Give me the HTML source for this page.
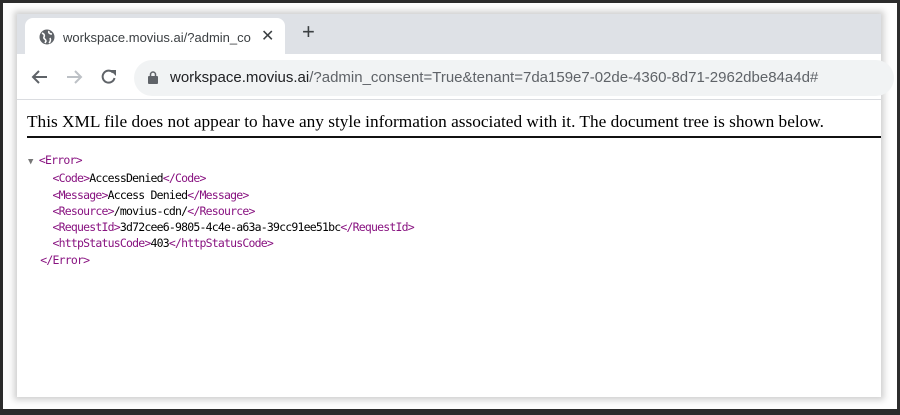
<!DOCTYPE html>
<html><head><style>
*{margin:0;padding:0;box-sizing:border-box}
html,body{width:900px;height:415px;overflow:hidden;background:#2b2b2b}
.frame{position:absolute;left:3px;top:3px;width:894px;height:406px;background:#fdfdfd}
.win{position:absolute;left:17px;top:14px;width:864px;height:383px;background:#fff;box-shadow:0 0 6px 3px rgba(0,0,0,.18)}
.strip{position:absolute;left:0;top:0;width:864px;height:40px;background:#dee1e6}
.tab{position:absolute;left:8px;top:4px;width:260px;height:37px;background:#fff;border-radius:8px 8px 0 0}
.tabt{position:absolute;left:38px;top:12px;font:13px "Liberation Sans",sans-serif;color:#3c4043;white-space:nowrap;width:188px;overflow:hidden}
.x{position:absolute;left:236px;top:8px;font:16px "Liberation Sans",sans-serif;color:#3c4043}
.plus{position:absolute;left:285px;top:5px;font:22px "Liberation Sans",sans-serif;color:#3c4043}
.tool{position:absolute;left:0;top:40px;width:864px;height:46px;background:#fff;border-bottom:1px solid #dadce0}
.omni{position:absolute;left:117px;top:6px;width:760px;height:36px;background:#f1f3f4;border-radius:18px}
.url{position:absolute;left:36px;top:9px;font:15px "Liberation Sans",sans-serif;color:#5f6368;white-space:nowrap}
.url b{font-weight:normal;color:#202124}
.msg{position:absolute;left:10px;top:98px;font:17.3px "Liberation Serif",serif;color:#000;white-space:nowrap}
.hr{position:absolute;left:10px;top:122px;width:854px;height:2px;background:#111}
.xml{position:absolute;left:11px;top:138px;font:11.5px/16.3px "DejaVu Sans Mono","Liberation Mono",monospace;color:#000;white-space:pre;letter-spacing:-0.8px}
.t{color:#881280}
</style></head><body>
<div class="frame"></div>
<div class="win">
 <div class="strip"></div>
 <div class="tab">
  <svg style="position:absolute;left:14px;top:11px" width="16" height="16" viewBox="0 0 16 16"><circle cx="8" cy="8" r="7.5" fill="#5f6368"/><path d="M3 4c2 1 3 2 2 4s2 2 2 4l-1 2M10 2c-1 2 1 3 3 3M11 9c1 2 0 4-1 5" stroke="#fff" stroke-width="1.6" fill="none"/></svg>
  <div class="tabt">workspace.movius.ai/?admin_consent</div>
  <div class="x">✕</div>
 </div>
 <div class="plus">+</div>
 <div class="tool">
  <svg style="position:absolute;left:14px;top:15px" width="18" height="16" viewBox="0 0 18 16"><path d="M16 8H3M8 2L2 8l6 6" stroke="#5f6368" stroke-width="2" fill="none"/></svg>
  <svg style="position:absolute;left:48px;top:15px" width="18" height="16" viewBox="0 0 18 16"><path d="M2 8h13M10 2l6 6-6 6" stroke="#bdc1c6" stroke-width="2" fill="none"/></svg>
  <svg style="position:absolute;left:83px;top:14px" width="18" height="18" viewBox="0 0 18 18"><path d="M14.5 10A6 6 0 1 1 13 4.5" stroke="#5f6368" stroke-width="2" fill="none"/><path d="M10 2h6v6z" fill="#5f6368"/></svg>
  <div class="omni">
   <svg style="position:absolute;left:14px;top:11px" width="10" height="13" viewBox="0 0 10 13"><rect x="0" y="5" width="10" height="8" rx="1" fill="#5f6368"/><path d="M2.5 5V3.5a2.5 2.5 0 0 1 5 0V5" stroke="#5f6368" stroke-width="1.5" fill="none"/></svg>
   <div class="url"><b>workspace.movius.ai</b>/?admin_consent=True&amp;tenant=7da159e7-02de-4360-8d71-2962dbe84a4d#</div>
  </div>
 </div>
 <div class="msg">This XML file does not appear to have any style information associated with it. The document tree is shown below.</div>
 <div class="hr"></div>
<div class="xml"><span style="color:#777;font-size:9px;letter-spacing:0">▼ </span><span class="t">&lt;Error&gt;</span>
    <span class="t">&lt;Code&gt;</span>AccessDenied<span class="t">&lt;/Code&gt;</span>
    <span class="t">&lt;Message&gt;</span>Access Denied<span class="t">&lt;/Message&gt;</span>
    <span class="t">&lt;Resource&gt;</span>/movius-cdn/<span class="t">&lt;/Resource&gt;</span>
    <span class="t">&lt;RequestId&gt;</span>3d72cee6-9805-4c4e-a63a-39cc91ee51bc<span class="t">&lt;/RequestId&gt;</span>
    <span class="t">&lt;httpStatusCode&gt;</span>403<span class="t">&lt;/httpStatusCode&gt;</span>
  <span class="t">&lt;/Error&gt;</span></div>
</div>
</body></html>
